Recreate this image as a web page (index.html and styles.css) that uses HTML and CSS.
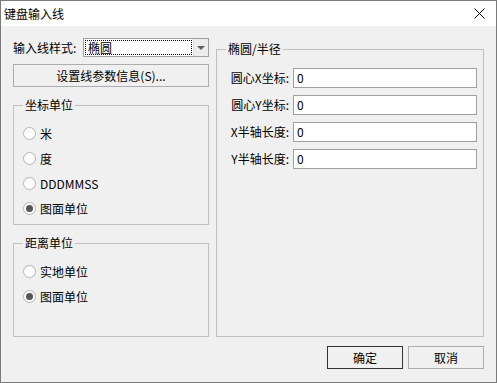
FILE: index.html
```html
<!DOCTYPE html>
<html lang="zh-CN">
  <head>
    <meta charset="UTF-8" />
    <title>键盘输入线</title>
    <link rel="stylesheet" href="styles.css">
  </head>
  <body>
    <div class="window">
      <div class="titlebar">
        <span class="title">键盘输入线</span>
        <svg class="close" width="11" height="11" viewBox="0 0 11 11">
          <path d="M0.5 0.5 L10.5 10.5 M10.5 0.5 L0.5 10.5" stroke="#000" stroke-width="1" fill="none" />
        </svg>
      </div>

      <div class="content">
        <div class="main">
          <div class="leftCol">
            <div class="comboRow">
              <span class="comboLabel">输入线样式:</span>
              <div class="combo">
                <span class="comboText">椭圆</span>
                <span class="comboArrow"><span class="triangle"></span></span>
              </div>
            </div>

            <button class="btn wide">设置线参数信息(S)...</button>

            <fieldset class="group coordGroup">
              <legend>坐标单位</legend>
              <label class="radioRow"><span class="radio"></span>米</label>
              <label class="radioRow"><span class="radio"></span>度</label>
              <label class="radioRow"><span class="radio"></span>DDDMMSS</label>
              <label class="radioRow"><span class="radio checked"></span>图面单位</label>
            </fieldset>

            <fieldset class="group distGroup">
              <legend>距离单位</legend>
              <label class="radioRow"><span class="radio"></span>实地单位</label>
              <label class="radioRow"><span class="radio checked"></span>图面单位</label>
            </fieldset>
          </div>

          <fieldset class="group rightGroup">
            <legend>椭圆/半径</legend>
            <div class="fields">
              <span class="fieldLabel">圆心X坐标:</span>
              <div class="textbox">0</div>
              <span class="fieldLabel">圆心Y坐标:</span>
              <div class="textbox">0</div>
              <span class="fieldLabel">X半轴长度:</span>
              <div class="textbox">0</div>
              <span class="fieldLabel">Y半轴长度:</span>
              <div class="textbox">0</div>
            </div>
          </fieldset>
        </div>

        <div class="actions">
          <button class="btn default">确定</button>
          <button class="btn">取消</button>
        </div>
      </div>
    </div>
  </body>
</html>
```

FILE: styles.css
```css
* {
  box-sizing: border-box;
  font-family: "Noto Sans CJK SC", sans-serif;
}

body {
  margin: 0;
  background: #ffffff;
  font-size: 12px;
  line-height: 16px;
  color: #000000;
}

.window {
  width: 497px;
  height: 383px;
  border: 1px solid #7a7a7a;
  display: flex;
  flex-direction: column;
}

.titlebar {
  height: 25px;
  background: #ffffff;
  display: flex;
  align-items: center;
  justify-content: space-between;
  padding: 0 11px 0 3px;
}

.content {
  flex: 1;
  background: #f0f0f0;
  padding: 12px 12px 0 12px;
}

.main {
  display: flex;
  gap: 7px;
}

.leftCol {
  width: 196px;
  display: flex;
  flex-direction: column;
}

/* combobox */
.comboRow {
  display: flex;
  align-items: center;
  justify-content: space-between;
  height: 19px;
}

.combo {
  width: 126px;
  height: 19px;
  border: 1px solid #a0a0a0;
  background: #ffffff;
  display: flex;
}

.comboText {
  flex: 1;
  margin: 1px;
  padding-left: 2px;
  border: 1px dotted #000000;
  line-height: 13px;
}

.comboArrow {
  width: 15px;
  background: #ececec;
  border-left: 1px solid #dedede;
  display: flex;
  align-items: center;
  justify-content: center;
}

.triangle {
  width: 0;
  height: 0;
  border-left: 4px solid transparent;
  border-right: 4px solid transparent;
  border-top: 4px solid #606060;
}

/* buttons */
.btn {
  height: 23px;
  background: #f0f0f0;
  border: 1px solid #adadad;
  font-size: 12px;
  padding: 0;
  color: #000000;
}

.wide {
  margin-top: 7px;
}

.default {
  border-color: #333333;
}

/* group boxes */
.group {
  margin: 0;
  border: 1px solid #c0c0c0;
  padding: 8px 9px 0 9px;
  min-width: 0;
}

.group legend {
  padding: 0 2px;
  line-height: 16px;
}

.coordGroup {
  margin-top: 10px;
  height: 128px;
}

.distGroup {
  margin-top: 10px;
  height: 102px;
}

.rightGroup {
  margin-top: 3px;
  width: 268px;
  height: 296px;
  padding-top: 11px;
  padding-right: 7px;
}

.radioRow {
  display: flex;
  align-items: center;
  gap: 4px;
  height: 25px;
}

.radio {
  width: 13px;
  height: 13px;
  border-radius: 50%;
  border: 1px solid #b3b3b3;
  background: #ffffff;
  display: flex;
  align-items: center;
  justify-content: center;
}

.radio.checked::after {
  content: "";
  width: 7px;
  height: 7px;
  border-radius: 50%;
  background: #555555;
}

/* text fields */
.fields {
  display: grid;
  grid-template-columns: 63px 184px;
  column-gap: 4px;
  row-gap: 7px;
  align-items: center;
}

.fieldLabel {
  text-align: right;
}

.textbox {
  height: 20px;
  border: 1px solid #a0a0a0;
  background: #ffffff;
  padding-left: 3px;
  line-height: 18px;
}

.actions {
  display: flex;
  justify-content: flex-end;
  gap: 5px;
  margin-top: 9px;
}

.actions .btn {
  width: 76px;
}
```
